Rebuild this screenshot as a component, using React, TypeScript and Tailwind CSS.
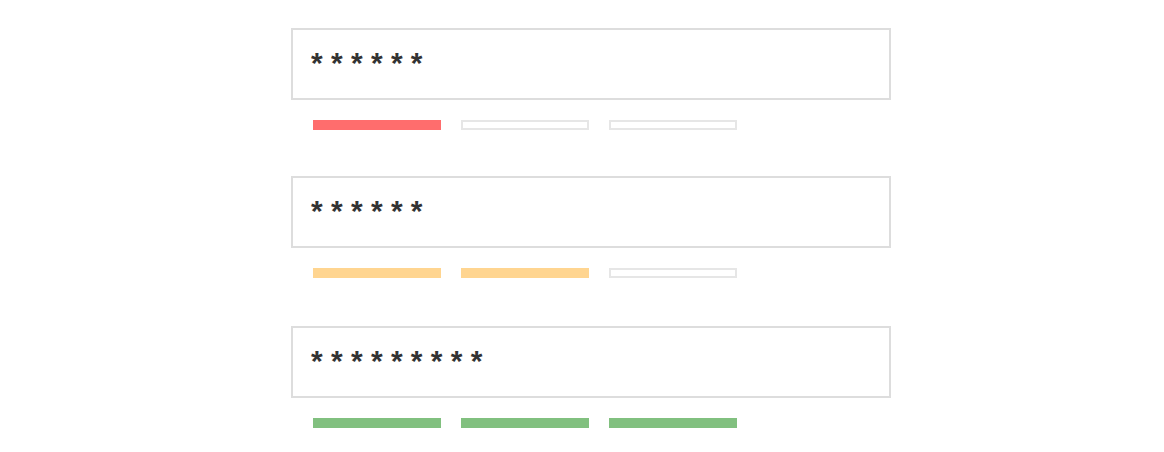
import React from 'react';

const levels = [
  { mask: '******', filled: 1, color: 'bg-[#ff6d6d]', mt: 'mt-[28px]' },
  { mask: '******', filled: 2, color: 'bg-[#ffd590]', mt: 'mt-[46px]' },
  { mask: '*********', filled: 3, color: 'bg-[#81c07f]', mt: 'mt-[48px]' },
];

const StrengthField = ({ mask, filled, color, mt }: { mask: string; filled: number; color: string; mt: string }) => {
  return (
    <div className={mt}>
      <div className="flex h-[72px] w-[600px] items-center border-2 border-[#dddddd] bg-white pl-[18px]">
        <span className="-mt-[2px] font-['Liberation_Sans',sans-serif] text-[30px] font-bold leading-none tracking-[8.3px] text-[#333333]">
          {mask}
        </span>
      </div>
      <div className="mt-[20px] flex gap-[20px] pl-[22px]">
        {[0, 1, 2].map((i) =>
          i < filled ? (
            <div key={i} className={`h-[10px] w-[128px] ${color}`} />
          ) : (
            <div key={i} className="h-[10px] w-[128px] border-2 border-[#e6e6e6]" />
          )
        )}
      </div>
    </div>
  );
};

export default function App() {
  return (
    <div className="h-[452px] w-[1164px] overflow-hidden bg-white pl-[291px]">
      {levels.map((l, i) => (
        <StrengthField key={i} {...l} />
      ))}
    </div>
  );
}
